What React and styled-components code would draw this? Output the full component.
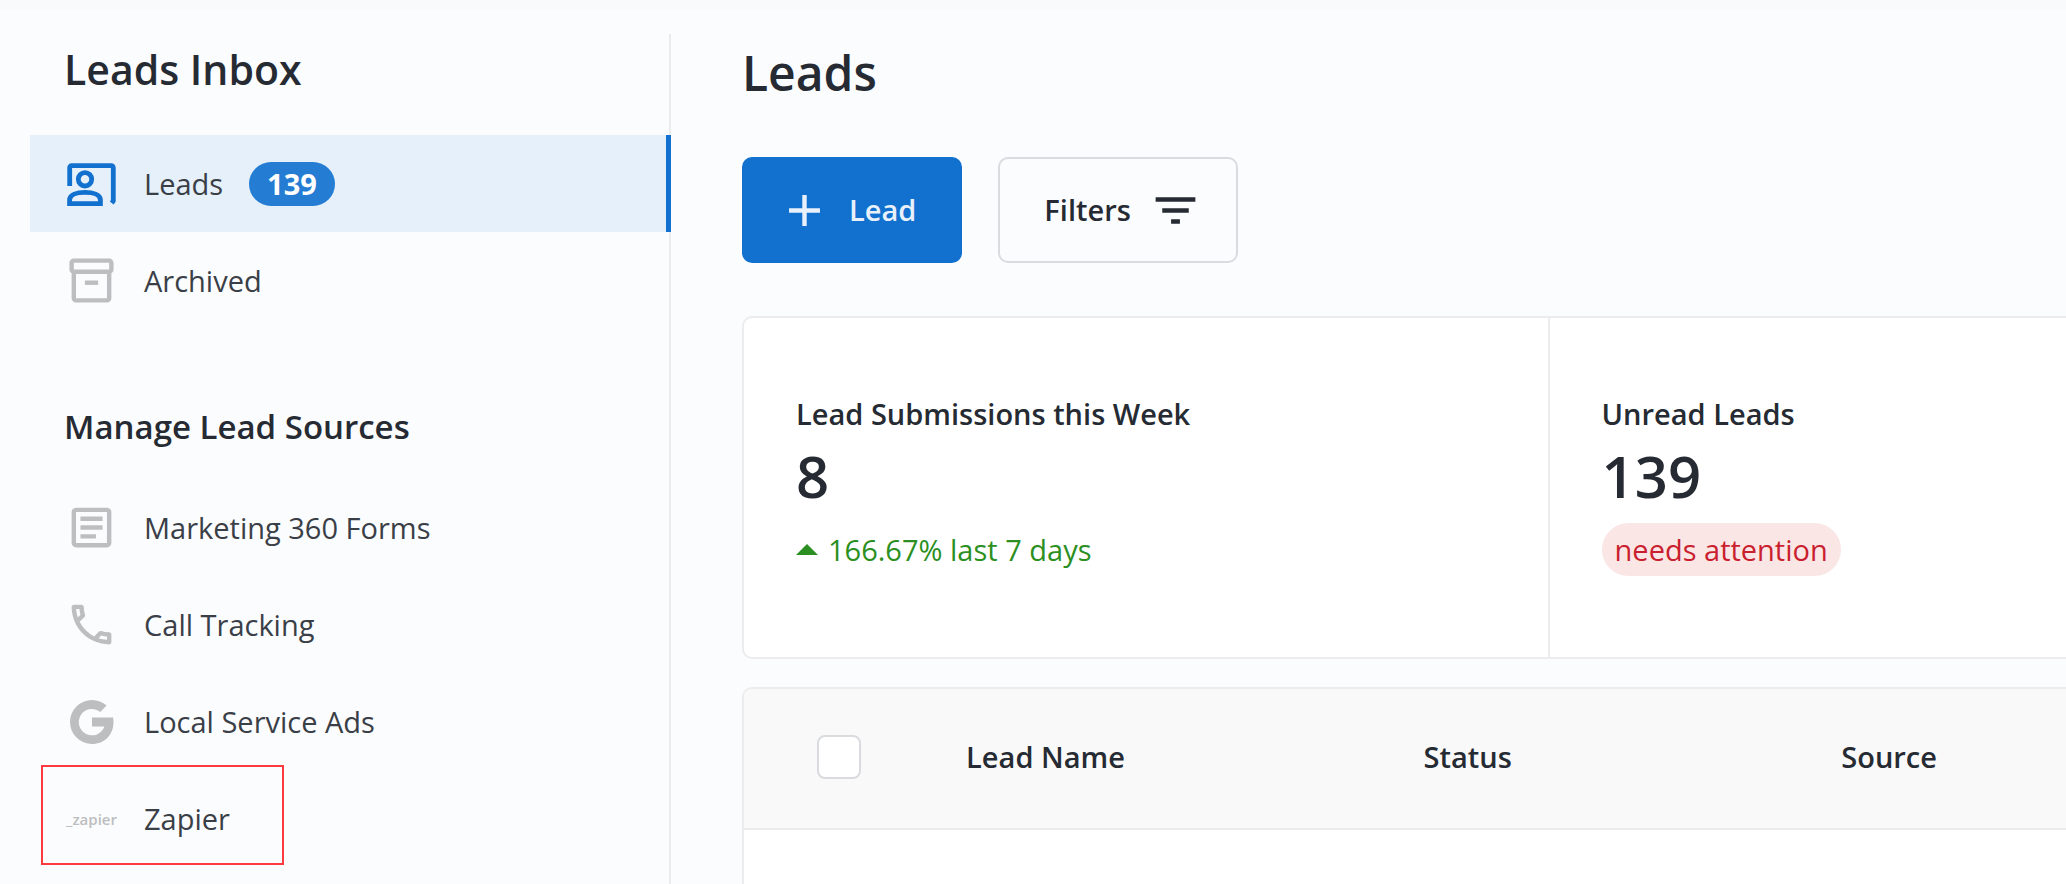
import styled, { createGlobalStyle } from "styled-components";
import {
  MdAdd,
  MdFilterList,
  MdOutlineArticle,
  MdOutlineCall,
  MdOutlineInventory2,
} from "react-icons/md";

const GlobalStyle = createGlobalStyle`
  * {
    box-sizing: border-box;
  }
  body {
    margin: 0;
    background-color: #fbfcfe;
    color: #262b33;
    font-family: "Open Sans", "Noto Sans", sans-serif;
    font-size: 29px;
    line-height: 40px;
  }
`;

const Page = styled.div`
  display: flex;
  min-height: 100vh;
  border-top: 10px solid #f9fafc;
  overflow: hidden;
`;

const Sidebar = styled.nav`
  flex: none;
  width: 641px;
  margin: 24px 0 0 30px;
  border-right: 2px solid #eaebed;
`;

const SidebarTitle = styled.h2`
  margin: 0;
  padding: 5px 34px 36px;
  font-size: 41px;
  font-weight: 600;
  line-height: 60px;
`;

const SidebarSubtitle = styled.h3`
  margin: 0;
  padding: 74px 34px 28px;
  font-size: 33px;
  font-weight: 600;
  line-height: 48px;
`;

const NavList = styled.ul`
  margin: 0;
  padding: 0;
  list-style: none;
`;

const NavLink = styled.a`
  position: relative;
  display: flex;
  align-items: center;
  height: 97px;
  margin-right: -2px;
  padding-left: 35px;
  border-right: 5px solid ${(props) => (props.$active ? "#1270cf" : "transparent")};
  background-color: ${(props) => (props.$active ? "#e5f0fa" : "transparent")};
  color: #3a3f47;
  text-decoration: none;
`;

const NavIcon = styled.span`
  display: flex;
  align-items: center;
  justify-content: center;
  width: 53px;
  margin-right: 26px;
  color: ${(props) => (props.$active ? "#1270cf" : "#bdbec0")};
`;

const ZapierMark = styled.span`
  font-size: 15px;
  font-weight: 600;
  line-height: 20px;
`;

const Count = styled.span`
  margin-left: 26px;
  padding: 0 18px;
  border-radius: 22px;
  background-color: #247dd3;
  color: #fff;
  font-weight: 700;
  line-height: 44px;
`;

const Highlight = styled.span`
  position: absolute;
  top: -5px;
  left: 11px;
  width: 243px;
  height: 100px;
  border: 2px solid #ff3b3f;
`;

const Main = styled.main`
  display: flex;
  flex: 1;
  flex-direction: column;
  min-width: 0;
  padding: 28px 0 0 71px;
`;

const Title = styled.h1`
  margin: 0 0 49px;
  font-size: 48px;
  font-weight: 600;
  line-height: 70px;
`;

const Toolbar = styled.div`
  display: flex;
  gap: 36px;
  margin-bottom: 53px;
`;

const Button = styled.button`
  display: flex;
  align-items: center;
  gap: 18px;
  height: 106px;
  padding: ${(props) => (props.$primary ? "0 44px 0 34px" : "0 34px 0 44px")};
  border: 2px solid ${(props) => (props.$primary ? "#1270cf" : "#d9dbde")};
  border-radius: 10px;
  background-color: ${(props) => (props.$primary ? "#1270cf" : "transparent")};
  color: ${(props) => (props.$primary ? "#e8f1fb" : "#262b33")};
  font: inherit;
  font-weight: 600;
  cursor: pointer;
`;

const Stats = styled.section`
  display: grid;
  grid-template-columns: 31fr 20fr;
  margin-bottom: 28px;
  border: 2px solid #ececee;
  border-right: 0;
  border-radius: 10px 0 0 10px;
  background-color: #fff;
`;

const Stat = styled.div`
  padding: 76px 52px 81px;

  & + & {
    border-left: 2px solid #ececee;
  }
`;

const StatLabel = styled.div`
  font-weight: 600;
`;

const StatValue = styled.div`
  padding: 4px 0 9px;
  font-size: 58px;
  font-weight: 600;
  line-height: 76px;
`;

const Trend = styled.div`
  display: flex;
  align-items: center;
  gap: 10px;
  color: #2b8f22;
  line-height: 53px;
`;

const Badge = styled.span`
  display: block;
  width: fit-content;
  padding: 0 13px;
  border-radius: 27px;
  background-color: #fbe6e6;
  color: #c91f2e;
  line-height: 53px;
`;

const TablePanel = styled.section`
  flex: 1;
  border: 2px solid #ececee;
  border-width: 2px 0 0 2px;
  border-radius: 10px 0 0 0;
  background-color: #fff;
  overflow: hidden;
`;

const Table = styled.table`
  width: 100%;
  border-collapse: collapse;
  table-layout: fixed;
`;

const HeaderCell = styled.th`
  width: ${(props) => props.$width};
  height: 140px;
  padding: 0 0 3px;
  border-bottom: 2px solid #ececee;
  background-color: #f9f9f9;
  font-weight: 600;
  text-align: left;
`;

const Checkbox = styled.input`
  display: block;
  width: 44px;
  height: 44px;
  margin: 0 0 0 73px;
  border: 2px solid #d9dbde;
  border-radius: 8px;
  background-color: #fff;
  appearance: none;
`;

const LeadsIcon = () => (
  <svg width="53" height="53" viewBox="-1 -1 53 53" fill="none" stroke="currentColor" strokeWidth="4.8">
    <path d="M3.7 28V9.7a2 2 0 0 1 2-2h39.6a2 2 0 0 1 2 2V43l-1.6 2" />
    <circle cx="19" cy="21.3" r="6.7" />
    <path d="M3.6 45.7V42c0-5.5 7.4-7.7 15.4-7.7s15.4 2.2 15.4 7.7v3.7z" />
  </svg>
);

const GoogleIcon = () => (
  <svg width="44" height="44" viewBox="0 0 44 44" fill="currentColor">
    <path d="M36.6 5.6l-6.3 6.3A13.2 13.2 0 1 0 34.4 26.6H22v-9h21.1c.2 1.4.4 2.9.4 4.4C43.5 35 34.5 44 22 44A22 22 0 0 1 22 0c5.6 0 10.7 2.1 14.6 5.6z" />
  </svg>
);

const inboxLinks = [
  { label: "Leads", icon: <LeadsIcon />, count: 139, active: true },
  { label: "Archived", icon: <MdOutlineInventory2 size={53} /> },
];

const sourceLinks = [
  { label: "Marketing 360 Forms", icon: <MdOutlineArticle size={53} /> },
  { label: "Call Tracking", icon: <MdOutlineCall size={53} /> },
  { label: "Local Service Ads", icon: <GoogleIcon /> },
  { label: "Zapier", icon: <ZapierMark>_zapier</ZapierMark>, highlighted: true },
];

const Links = ({ items }) => (
  <NavList>
    {items.map((item) => (
      <li key={item.label}>
        <NavLink href="#" $active={item.active}>
          <NavIcon $active={item.active}>{item.icon}</NavIcon>
          {item.label}
          {item.count && <Count>{item.count}</Count>}
          {item.highlighted && <Highlight />}
        </NavLink>
      </li>
    ))}
  </NavList>
);

export default function App() {
  return (
    <Page>
      <GlobalStyle />
      <Sidebar>
        <SidebarTitle>Leads Inbox</SidebarTitle>
        <Links items={inboxLinks} />
        <SidebarSubtitle>Manage Lead Sources</SidebarSubtitle>
        <Links items={sourceLinks} />
      </Sidebar>
      <Main>
        <Title>Leads</Title>
        <Toolbar>
          <Button $primary>
            <MdAdd size={53} />
            Lead
          </Button>
          <Button>
            Filters
            <MdFilterList size={53} />
          </Button>
        </Toolbar>
        <Stats>
          <Stat>
            <StatLabel>Lead Submissions this Week</StatLabel>
            <StatValue>8</StatValue>
            <Trend>
              <svg width="22" height="11" viewBox="0 0 22 11" fill="currentColor">
                <path d="M0 11 11 0l11 11z" />
              </svg>
              166.67% last 7 days
            </Trend>
          </Stat>
          <Stat>
            <StatLabel>Unread Leads</StatLabel>
            <StatValue>139</StatValue>
            <Badge>needs attention</Badge>
          </Stat>
        </Stats>
        <TablePanel>
          <Table>
            <thead>
              <tr>
                <HeaderCell $width="16.8%">
                  <Checkbox type="checkbox" aria-label="Select all leads" />
                </HeaderCell>
                <HeaderCell $width="34.6%">Lead Name</HeaderCell>
                <HeaderCell $width="31.6%">Status</HeaderCell>
                <HeaderCell>Source</HeaderCell>
              </tr>
            </thead>
          </Table>
        </TablePanel>
      </Main>
    </Page>
  );
}
